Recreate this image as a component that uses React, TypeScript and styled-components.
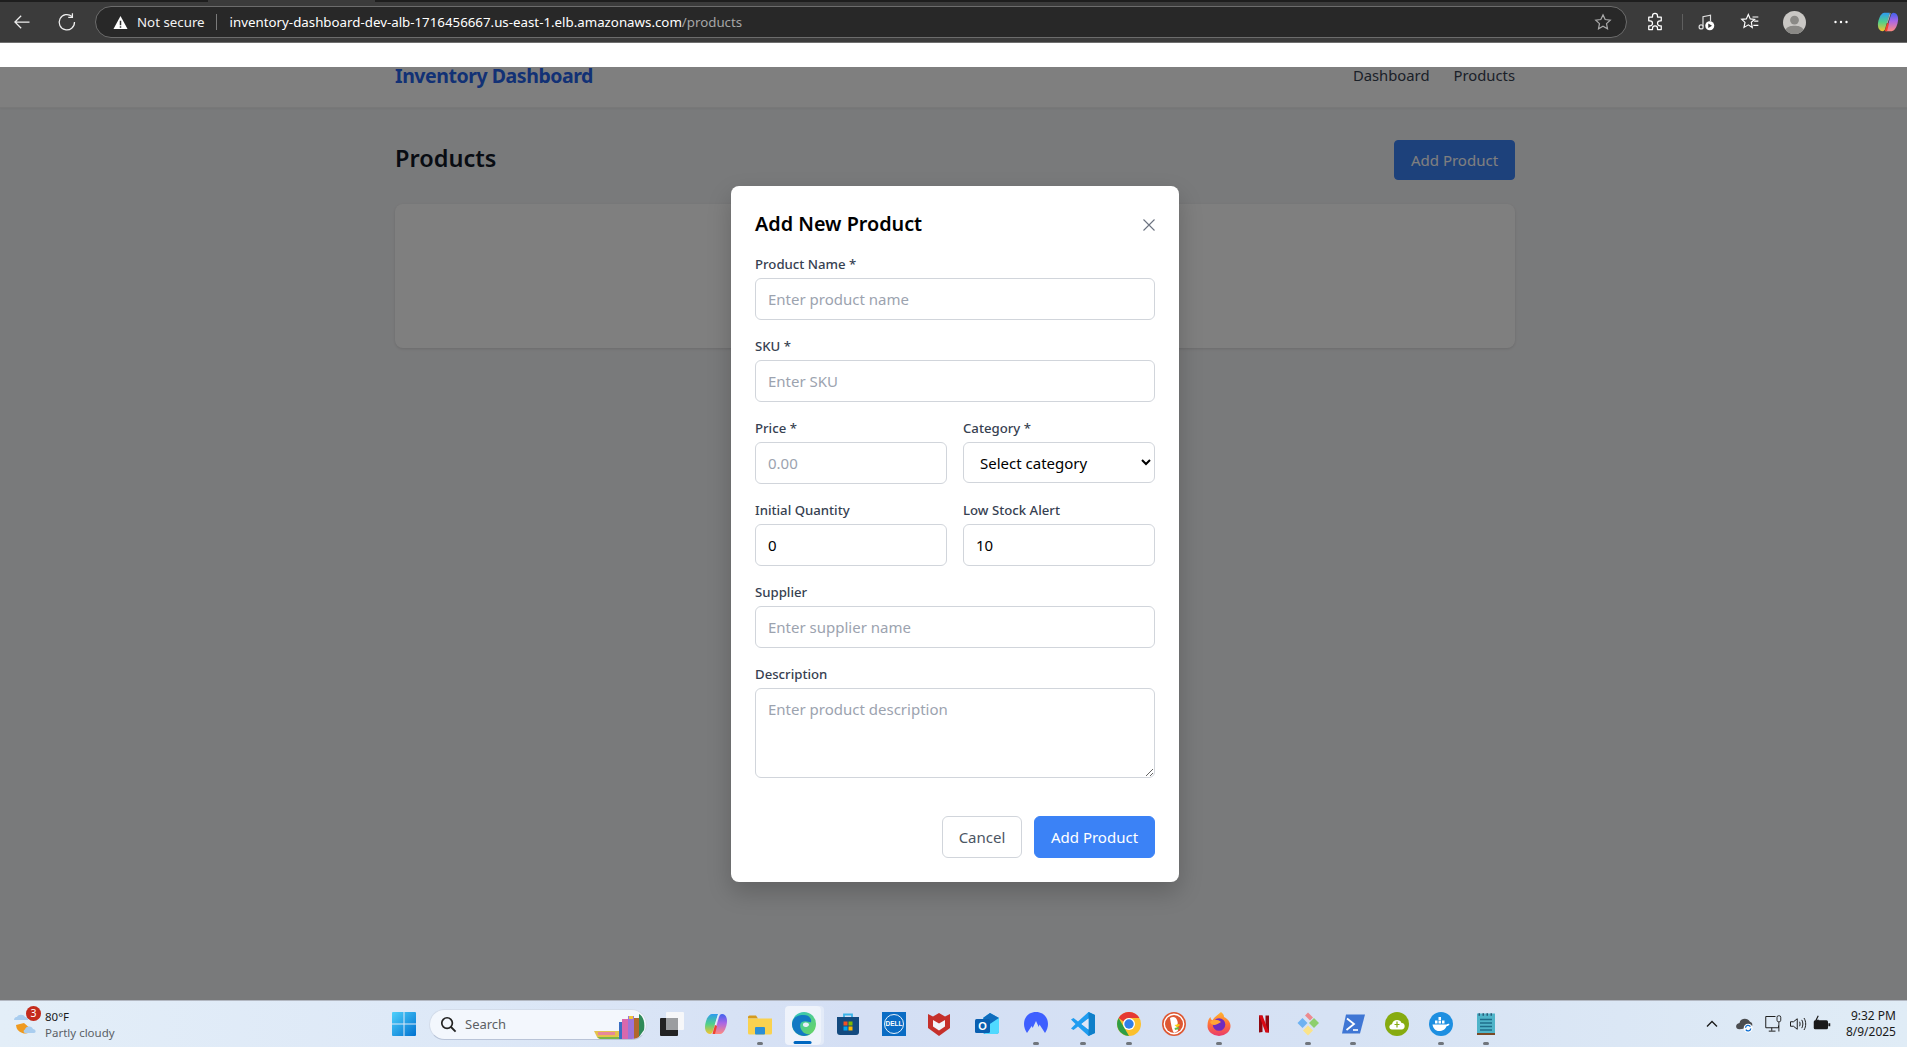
import React from "react";
import styled, { createGlobalStyle } from "styled-components";

const GlobalStyle = createGlobalStyle`
  html, body {
    margin: 0;
    padding: 0;
    height: 100%;
    overflow: hidden;
    font-family: "Noto Sans", "Liberation Sans", sans-serif;
  }
  #root { height: 100%; }
  * { box-sizing: border-box; }
`;

const Screen = styled.div`
  height: 1047px;
  display: flex;
  flex-direction: column;
`;

/* ---------- browser chrome ---------- */

const BrowserBar = styled.header`
  height: 43px;
  flex: none;
  background: #3b3b3b;
  border-top: 2px solid #1e1e1e;
  border-bottom: 1px solid #6f6f6f;
  display: flex;
  align-items: center;
  color: #fff;
  position: relative;
`;

const ActiveTab = styled.div`
  position: absolute;
  top: -2px;
  left: 208px;
  width: 167px;
  height: 2px;
  background: #3b3b3b;
`;

const NavIcon = styled.div<{ $w: number }>`
  width: ${(p) => p.$w}px;
  flex: none;
  display: flex;
  align-items: center;
  justify-content: center;
`;

const AddressBar = styled.div`
  width: 1532px;
  height: 32px;
  margin-left: 6px;
  flex: none;
  background: #282828;
  border: 1px solid #6c6c6c;
  border-radius: 16px;
  display: flex;
  align-items: center;
  padding: 0 14px 0 17px;
  font-size: 13.3px;
`;

const Secure = styled.span`
  margin-left: 9px;
  padding-right: 11px;
  border-right: 1px solid #7a7a7a;
  line-height: 16px;
  color: #f2f2f2;
`;

const Url = styled.span`
  margin-left: 13px;
  flex: 1;
  color: #fff;
  white-space: nowrap;
`;

const UrlPath = styled.span`
  color: #a6a6a6;
`;

const ToolSlot = styled.div<{ $w: number }>`
  width: ${(p) => p.$w}px;
  flex: none;
  display: flex;
  align-items: center;
  justify-content: center;
`;

const ToolDivider = styled.div`
  width: 1px;
  height: 16px;
  background: #5f5f5f;
  flex: none;
`;

const WhiteStrip = styled.div`
  height: 24px;
  flex: none;
  background: #fff;
`;

/* ---------- page behind the dialog ---------- */

const Page = styled.main`
  flex: 1;
  min-height: 0;
  width: 1910px;
  position: relative;
  background: #f3f4f6;
`;

const TopNav = styled.nav`
  height: 41px;
  background: #fff;
  border-bottom: 1px solid #f0f0f0;
  box-shadow: 0 1px 2px rgba(0, 0, 0, 0.05);
`;

const Container = styled.div`
  width: 1120px;
  margin: 0 auto;
`;

const NavRow = styled(Container)`
  display: flex;
  justify-content: space-between;
  align-items: flex-start;
`;

const Brand = styled.a`
  font-size: 19.5px;
  font-weight: 700;
  line-height: 18px;
  color: #2563eb;
  letter-spacing: -0.45px;
`;

const NavLinks = styled.div`
  display: flex;
  gap: 24px;
`;

const NavLink = styled.a`
  font-size: 14.8px;
  line-height: 16px;
  color: #374151;
`;

const Content = styled(Container)`
  padding-top: 32px;
`;

const PageHead = styled.div`
  display: flex;
  justify-content: space-between;
  align-items: flex-start;
  margin-bottom: 24px;
`;

const PageTitle = styled.h1`
  margin: 0;
  font-size: 23.5px;
  line-height: 36px;
  font-weight: 600;
  color: #111827;
`;

const Card = styled.section`
  height: 144px;
  background: #fff;
  border-radius: 8px;
  box-shadow: 0 1px 3px rgba(0, 0, 0, 0.12);
`;

/* ---------- dialog ---------- */

const Overlay = styled.div`
  position: absolute;
  inset: 0;
  padding-top: 1px;
  background: rgba(0, 0, 0, 0.5);
  display: flex;
  align-items: center;
  justify-content: center;
`;

const Modal = styled.form`
  width: 448px;
  background: #fff;
  border-radius: 8px;
  padding: 24px;
  box-shadow: 0 10px 25px rgba(0, 0, 0, 0.2);
`;

const ModalHead = styled.div`
  height: 28px;
  margin-bottom: 16px;
  display: flex;
  justify-content: space-between;
  align-items: center;
`;

const ModalTitle = styled.h2`
  margin: 0;
  font-size: 19.8px;
  line-height: 28px;
  font-weight: 600;
  color: #000;
`;

const CloseButton = styled.button`
  border: 0;
  padding: 0;
  margin-top: 2px;
  background: none;
  display: flex;
  color: #6b7280;
`;

const Field = styled.div`
  margin-bottom: 16px;
  min-width: 0;
`;

const FieldRow = styled.div`
  display: grid;
  grid-template-columns: 1fr 1fr;
  gap: 16px;
`;

const Label = styled.label`
  display: block;
  height: 20px;
  margin-bottom: 4px;
  font-size: 13.2px;
  line-height: 20px;
  font-weight: 500;
  color: #374151;
`;

const controlStyles = `
  display: block;
  width: 100%;
  border: 1px solid #d1d5db;
  border-radius: 6px;
  font-family: inherit;
  font-size: 15px;
  color: #000;
  background: #fff;
  &::placeholder { color: #9ca3af; opacity: 1; }
`;

const Input = styled.input`
  ${controlStyles}
  height: 42px;
  padding: 0 12px;
`;

const Select = styled.select`
  ${controlStyles}
  height: 41px;
  padding: 0 12px;
`;

const TextArea = styled.textarea`
  ${controlStyles}
  height: 90px;
  padding: 10px 12px;
  resize: vertical;
`;

const Actions = styled.div`
  display: flex;
  justify-content: flex-end;
  gap: 12px;
  margin-top: 38px;
`;

const Button = styled.button<{ $primary?: boolean; $w: number; $h: number }>`
  width: ${(p) => p.$w}px;
  height: ${(p) => p.$h}px;
  padding: 0;
  border-radius: ${(p) => (p.$h === 40 ? 4 : 6)}px;
  font-family: inherit;
  font-size: 15px;
  border: 1px solid ${(p) => (p.$primary ? "#3b82f6" : "#d1d5db")};
  background: ${(p) => (p.$primary ? "#3b82f6" : "#fff")};
  color: ${(p) => (p.$primary ? "#fff" : "#4b5563")};
`;

/* ---------- windows taskbar ---------- */

const Taskbar = styled.footer`
  height: 47px;
  flex: none;
  border-top: 1px solid #b3b8c2;
  background: linear-gradient(90deg, #e3eef8 0%, #dde8f7 25%, #d4dff4 45%, #d6e2f4 70%, #e0ecf6 100%);
  display: flex;
  align-items: center;
  position: relative;
  z-index: 2;
`;

const Weather = styled.div`
  width: 392px;
  flex: none;
  height: 100%;
  padding-left: 13px;
  display: flex;
  align-items: center;
  gap: 6px;
  position: relative;
`;

const WeatherBadge = styled.span`
  position: absolute;
  left: 26px;
  top: 5px;
  width: 15px;
  height: 15px;
  border-radius: 50%;
  background: #c42b1c;
  color: #fff;
  font-size: 10.5px;
  line-height: 15px;
  text-align: center;
`;

const WeatherText = styled.div`
  font-size: 11.5px;
  line-height: 16px;
  color: #1a1a1a;
  margin-top: 1px;
`;

const WeatherSub = styled.div`
  color: #5a5f66;
`;

const SearchPill = styled.div`
  width: 218px;
  height: 31px;
  margin: 0 13px;
  flex: none;
  border-radius: 16px;
  background: #f3f7fd;
  border: 1px solid #d3dcea;
  border-bottom-color: #b9c4d8;
  display: flex;
  align-items: center;
  padding-left: 10px;
  position: relative;
  overflow: hidden;
  font-size: 13px;
  color: #5c5f64;
`;

const SearchLabel = styled.span`
  margin-left: 8px;
`;

const SearchArt = styled.div`
  position: absolute;
  right: 0;
  top: 0;
  display: flex;
`;

const AppList = styled.div`
  display: flex;
  margin-left: 10px;
  flex: none;
`;

const AppSlot = styled.div<{ $extra: number; $active?: boolean }>`
  width: 44px;
  height: 44px;
  margin-left: ${(p) => p.$extra}px;
  flex: none;
  display: flex;
  align-items: center;
  justify-content: center;
  position: relative;

  ${(p) =>
    p.$active &&
    `&::before {
      content: "";
      position: absolute;
      left: 3px;
      right: 5px;
      top: 4px;
      bottom: 1px;
      border-radius: 4px;
      background: rgba(255, 255, 255, 0.6);
      box-shadow: 3px 0 0 rgba(255, 255, 255, 0.35);
    }`}

  & > svg {
    position: relative;
  }
`;

const RunDot = styled.span<{ $active?: boolean }>`
  position: absolute;
  bottom: ${(p) => (p.$active ? 2 : 1)}px;
  left: 50%;
  transform: translateX(${(p) => (p.$active ? -58 : -50)}%);
  width: ${(p) => (p.$active ? 18 : 6)}px;
  height: 3px;
  border-radius: 2px;
  background: ${(p) => (p.$active ? "#0067c0" : "#70757c")};
`;

const Tray = styled.div`
  margin-left: auto;
  display: flex;
  align-items: center;
  height: 100%;
  padding-right: 11px;
`;

const TraySlot = styled.div<{ $w: number }>`
  width: ${(p) => p.$w}px;
  flex: none;
  display: flex;
  align-items: center;
  justify-content: center;
`;

const Clock = styled.div`
  margin-left: 8px;
  width: 52px;
  font-size: 12px;
  line-height: 16px;
  text-align: right;
  color: #1a1a1a;
  white-space: nowrap;
`;

/* ---------- icons ---------- */

const Svg = ({ s = 24, v = 24, children }: { s?: number; v?: number; children: React.ReactNode }) => (
  <svg width={s} height={s} viewBox={`0 0 ${v} ${v}`} fill="none">
    {children}
  </svg>
);

const BackIcon = () => (
  <Svg s={20}>
    <path d="M21 12H4M11 4.5 3.5 12l7.5 7.5" stroke="#eee" strokeWidth="1.5" />
  </Svg>
);
const ReloadIcon = () => (
  <Svg s={20}>
    <path d="M18 5.5A9.2 9.2 0 1 0 21 12" stroke="#eee" strokeWidth="1.5" />
    <path d="M18.5 1.5v5h-5" stroke="#eee" strokeWidth="1.5" />
  </Svg>
);
const WarnIcon = () => (
  <Svg s={15} v={16}>
    <path d="M8 1 15.5 15H.5z" fill="#fff" />
    <path d="M7.2 6h1.6v5H7.2zM7.2 12h1.6v1.6H7.2z" fill="#333" />
  </Svg>
);
const StarIcon = () => (
  <Svg s={18}>
    <path d="m12 2.5 2.9 6.2 6.8.8-5 4.7 1.3 6.8-6-3.4-6 3.4 1.3-6.8-5-4.7 6.8-.8z" stroke="#aaa" strokeWidth="1.6" />
  </Svg>
);
const PuzzleIcon = () => (
  <Svg s={20}>
    <path
      d="M9 4.5a3 3 0 0 1 6 0V6h4.5v4.5H18a3 3 0 0 0 0 6h1.5V21H15v-1.500a3 3 0 0 0-6 0V21H4.500v-4.500H6a3 3 0 0 0 0-6H4.500V6H9z"
      stroke="#fff"
      strokeWidth="1.5"
      strokeLinejoin="round"
    />
  </Svg>
);
const MusicIcon = () => (
  <Svg s={18}>
    <path d="M8 18V5l10-2v8" stroke="#ddd" strokeWidth="1.6" />
    <circle cx="5.5" cy="18.5" r="2.7" stroke="#ddd" strokeWidth="1.6" />
    <circle cx="17" cy="17" r="6" fill="#fff" />
    <path d="m15 14 5 3-5 3z" fill="#333" />
  </Svg>
);
const FavIcon = () => (
  <Svg s={20}>
    <path d="m10 3 2.3 5.3 5.2.5-3.900 3.600 1.100 6.100L10 15.400 4.800 18.500l1.200-6L2 8.800l5.600-.5z" stroke="#fff" strokeWidth="1.4" />
    <path d="M15 6h7M17 11h5M16 16h6" stroke="#fff" strokeWidth="1.4" />
  </Svg>
);
const AvatarIcon = () => (
  <Svg s={23}>
    <circle cx="12" cy="12" r="12" fill="#c9c7c4" />
    <circle cx="12" cy="9.5" r="4.6" fill="#8a8986" />
    <path d="M2.5 19.500C5 16 8 15.500 12 15.500s7 .5 9.500 4A12 12 0 0 1 2.500 19.500z" fill="#8a8986" />
  </Svg>
);
const MoreIcon = () => (
  <Svg s={16} v={16}>
    <circle cx="2.5" cy="8" r="1.2" fill="#fff" />
    <circle cx="8" cy="8" r="1.2" fill="#fff" />
    <circle cx="13.5" cy="8" r="1.2" fill="#fff" />
  </Svg>
);
const CopilotIcon = ({ s = 24 }: { s?: number }) => (
  <Svg s={s}>
    <defs>
      <linearGradient id="cp1" x1="0" y1="0" x2="0" y2="1">
        <stop offset="0" stopColor="#2e9bf0" />
        <stop offset="0.5" stopColor="#4fd08a" />
        <stop offset="1" stopColor="#f7c42c" />
      </linearGradient>
      <linearGradient id="cp2" x1="0" y1="0" x2="0" y2="1">
        <stop offset="0" stopColor="#3f62ee" />
        <stop offset="0.45" stopColor="#a866e6" />
        <stop offset="1" stopColor="#ff8a80" />
      </linearGradient>
    </defs>
    <path d="M8 2h6L9 19c-.6 2-1.500 3-3 3C3 22 1 19 1 15 1 10 4 2 8 2z" fill="url(#cp1)" />
    <path d="M16 22h-6l5-17c.6-2 1.500-3 3-3 3 0 5 3 5 7 0 5-3 13-7 13z" fill="url(#cp2)" />
    <path d="M9.500 18 11 13l2 1-2 8H8.500z" fill="#f0432e" />
    <path d="M11.200 13 14.500 2.500" stroke="#f4f4ff" strokeWidth="1" opacity="0.7" />
  </Svg>
);
const CloseIcon = () => (
  <Svg s={12} v={12}>
    <path d="M.5.5l11 11M11.500.5l-11 11" stroke="currentColor" strokeWidth="1.1" />
  </Svg>
);
const WeatherIcon = () => (
  <Svg s={26} v={26}>
    <path d="M3 14a9 9 0 0 0 16 5L11 12z" fill="#ef9a1f" />
    <path d="M1 9c0-2.500 2-3 3-3 1-3 7-3 8 0 2 0 3 1 3 3z" fill="#a9cdef" />
    <path d="M12 22c-1.500 0-2-3 0-3.500.5-3 6-4.500 8-.5 3 0 3.500 4 1 4z" fill="#a9cdef" />
  </Svg>
);
const SearchIcon = () => (
  <Svg s={17}>
    <circle cx="10" cy="10" r="7.5" stroke="#222" strokeWidth="2.4" />
    <path d="m15.500 15.500 6.500 6.500" stroke="#222" strokeWidth="2.6" />
  </Svg>
);
const StartLogo = () => (
  <Svg s={24}>
    <defs>
      <linearGradient id="win" x1="0" y1="0" x2="1" y2="1">
        <stop offset="0" stopColor="#4fd0fb" />
        <stop offset="1" stopColor="#0071d0" />
      </linearGradient>
    </defs>
    <path
      d="M0 1a1 1 0 0 1 1-1h10.500v11.500H0zM12.500 0H23a1 1 0 0 1 1 1v10.500H12.500zM0 12.500h11.500V24H1a1 1 0 0 1-1-1zM12.500 12.500H24V23a1 1 0 0 1-1 1H12.500z"
      fill="url(#win)"
    />
  </Svg>
);
const BooksArt = () => (
  <svg width="52" height="31" viewBox="0 0 52 31">
    <path d="M0 21h25v5l-2 4H6l-3-3z" fill="#e5c24d" />
    <path d="M4 22h17v3H4z" fill="#e8879a" />
    <path d="M3 27h22v3H8z" fill="#7ab648" />
    <rect x="25" y="12" width="3" height="19" fill="#3a6fc4" />
    <rect x="28" y="9" width="6" height="22" fill="#d968ad" />
    <rect x="34" y="6" width="6" height="25" fill="#9c74d8" />
    <rect x="35" y="6" width="4" height="3" fill="#f0c53a" />
    <rect x="40" y="8" width="5" height="23" fill="#b1672c" />
    <path d="M45 4c5 3 6 9 5 16l-5 7z" fill="#2f8a58" />
  </svg>
);
const TaskViewIcon = () => (
  <Svg s={24}>
    <rect x="6" y="0" width="18" height="18" rx="1" fill="#f6f7f9" />
    <rect x="0" y="6" width="18" height="18" rx="1" fill="#232323" />
    <rect x="6" y="6" width="12" height="12" fill="#9b9da0" />
  </Svg>
);
const FilesIcon = () => (
  <Svg>
    <path d="M0 5a1.500 1.500 0 0 1 1.500-1.500H8l2 3H0z" fill="#d59a1e" />
    <path d="M0 6.500h24V21a1.500 1.500 0 0 1-1.500 1.500h-21A1.500 1.500 0 0 1 0 21z" fill="#fad24f" />
    <rect x="7" y="15" width="10" height="7.5" rx="1" fill="#2b8fd6" />
  </Svg>
);
const EdgeIcon = () => (
  <Svg>
    <defs>
      <linearGradient id="edge1" x1="0" y1="0" x2="1" y2="1">
        <stop offset="0" stopColor="#2ec4c4" />
        <stop offset="1" stopColor="#6fd65a" />
      </linearGradient>
    </defs>
    <circle cx="12" cy="12" r="12" fill="url(#edge1)" />
    <path d="M0 12C1 4 7 3 12 3c5 0 8 4 7 7-1 1-5-2-9 0-3 2-2 7 1 10 2 2 5 3 8 1.500A12 12 0 0 1 0 12z" fill="#1279c4" />
    <path d="M11 12c1-2 4-2 5.500-.5 1.500 1.500-.5 3.500-3 3.500-1.500 0-3-1-2.500-3z" fill="#e6eef8" />
  </Svg>
);
const StoreIcon = () => (
  <Svg>
    <path d="M8 5V2.500h8V5" stroke="#3ab4e8" strokeWidth="1.8" />
    <path d="M1 5h22v15a3 3 0 0 1-3 3H4a3 3 0 0 1-3-3z" fill="#134a7f" />
    <rect x="7.5" y="9.500" width="4" height="4" fill="#f25022" />
    <rect x="12.5" y="9.500" width="4" height="4" fill="#7fba00" />
    <rect x="7.5" y="14.500" width="4" height="4" fill="#00a4ef" />
    <rect x="12.5" y="14.500" width="4" height="4" fill="#ffb900" />
  </Svg>
);
const DellIcon = () => (
  <Svg>
    <rect width="24" height="24" fill="#0a6cc4" />
    <circle cx="12" cy="12" r="9.5" stroke="#fff" strokeWidth="0.9" />
    <text x="12" y="14.3" textAnchor="middle" fontSize="6.5" fontWeight="700" fill="#fff" fontFamily="Liberation Sans">
      DELL
    </text>
  </Svg>
);
const McAfeeIcon = () => (
  <Svg>
    <path d="M1 2 6 4.500l6-3.500 6 3.500L23 2v14l-11 8L1 16z" fill="#c5302b" />
    <path d="M6 8l6 3.500L18 8v6.500l-6 4-6-4z" fill="#f2f4fa" />
  </Svg>
);
const OutlookIcon = () => (
  <Svg>
    <path d="M8 6l7-5 9 5v13a3 3 0 0 1-3 3H10a2 2 0 0 1-2-2z" fill="#28a8ea" />
    <path d="M15 1l9 5-9 6-7-6z" fill="#0f6cbd" />
    <path d="M12 14l12-8v13a3 3 0 0 1-3 3H10z" fill="#50d9ff" />
    <rect x="0" y="7" width="15" height="14" rx="1.5" fill="#0a5fb0" />
    <text x="7.5" y="18" textAnchor="middle" fontSize="11" fontWeight="700" fill="#fff" fontFamily="Liberation Sans">
      O
    </text>
  </Svg>
);
const NordIcon = () => (
  <Svg>
    <path d="M3 21C1 18 0 15 0 12 0 5 5 0 12 0s12 5 12 12c0 3-1 6-3 9l-5.500-8.500-.7 2.500-2.800-6-3.300 7-1-2z" fill="#3e5fff" />
  </Svg>
);
const VscodeIcon = () => (
  <Svg>
    <path d="M17.500 0 24 3v18l-6.500 3L7 14.500 2.500 18 0 16.500 4.500 12 0 7.500 2.500 6 7 9.500z" fill="#1f9cf0" />
    <path d="M17.500 6.500 10.500 12l7 5.500z" fill="#dfe6f6" />
    <path d="M17.500 0 24 3v18l-6.500 3z" fill="#0f7fc9" />
    <path d="M17.500 6.500 10.500 12l7 5.500z" fill="#dfe6f6" />
  </Svg>
);
const ChromeIcon = () => (
  <Svg>
    <circle cx="12" cy="12" r="12" fill="#fbc02d" />
    <path d="M1.600 6 8 17l4 6.900A12 12 0 0 1 1.600 6z" fill="#2e9e46" />
    <path d="M1.600 6A12 12 0 0 1 22.400 6H12a6 6 0 0 0-5.500 3.500z" fill="#e53935" />
    <circle cx="12" cy="12" r="6" fill="#fff" />
    <circle cx="12" cy="12" r="4.7" fill="#2f7fe8" />
  </Svg>
);
const DuckIcon = () => (
  <Svg>
    <circle cx="12" cy="12" r="11.2" fill="#fff" stroke="#de5833" strokeWidth="1.6" />
    <circle cx="12" cy="12" r="9" fill="#de5833" />
    <path d="M8 6c3-2 6-1 7 2 1 2 1 4 0 5l1 6-4 2c-2-3-3-9-4-15z" fill="#fff" />
    <path d="M12.500 13l5-1v2l-3 1z" fill="#fdd20a" />
    <path d="M12.500 16l4-1 .5 2-4 1z" fill="#65bc46" />
  </Svg>
);
const FirefoxIcon = () => (
  <Svg>
    <defs>
      <linearGradient id="ff" x1="0" y1="0" x2="0" y2="1">
        <stop offset="0" stopColor="#ffb62e" />
        <stop offset="0.5" stopColor="#ff7139" />
        <stop offset="1" stopColor="#ea3a6c" />
      </linearGradient>
    </defs>
    <path d="M14 0c2 1.500 3 3 3 5 4 2 6.500 5 6.500 9A11.500 10 0 0 1 .5 14C.5 9 2 6 3.500 5c0 2 1 3 2 3.500C7 5 11 3 14 0z" fill="url(#ff)" />
    <circle cx="12" cy="12.5" r="6.3" fill="#6e2bc0" />
    <path d="M3 10c3-3 8-3 11 0-2 1-5 3-7 3-2 0-3-1-4-3z" fill="#ffa436" />
  </Svg>
);
const NetflixIcon = () => (
  <Svg>
    <path d="M7 3.500h3.500V20L7 20.500z" fill="#8f0810" />
    <path d="M13.500 3.500H17v17L13.500 20z" fill="#8f0810" />
    <path d="M7 3.500h3.500L17 20.500h-3.500z" fill="#d90a14" />
  </Svg>
);
const GitIcon = () => (
  <Svg>
    <path d="M12 .5 17 5.500l-3 3-5-5z" fill="#ed8a8e" />
    <path d="M6.500 6 11.500 11l-5 5-5-5z" fill="#6eb2f2" />
    <path d="M18 6l5 5-5 5-5-5z" fill="#8dcf6e" />
    <path d="M12 13.500l5 5-5 5-5-5z" fill="#fae38a" />
  </Svg>
);
const PowerShellIcon = () => (
  <Svg>
    <path d="M5 2.500h19L19 21.500H1z" fill="#3f76d4" />
    <path d="M6 6.500 13 12 5.500 18" stroke="#fff" strokeWidth="1.8" />
    <path d="M12 18h5" stroke="#fff" strokeWidth="1.6" />
  </Svg>
);
const GreenCloudIcon = () => (
  <Svg>
    <circle cx="12" cy="12" r="12" fill="#86ab10" />
    <path d="M7 17.500c-3.500 0-3.500-5 0-5.200C7.500 7.500 15 6.500 16.500 11c4-.5 4.500 6.500 0 6.500z" fill="#fff" />
    <path d="M12 9.500v6M9.500 12.500h5" stroke="#86ab10" strokeWidth="1.2" />
  </Svg>
);
const DockerIcon = () => (
  <Svg>
    <circle cx="12" cy="12" r="12" fill="#1d8fe1" />
    <path d="M3.500 12.500h14c.8-.8 2-1 3-.5-.5 1.500-1.500 2-2.800 2-1 3-4 5-7.700 5-3.500 0-5.800-2.500-6.500-6.500z" fill="#fff" />
    <path d="M6 8.500h2.500v3H6zM9.500 8.500h2.500v3H9.500zM13 8.500h2.500v3H13zM9.500 5h2.500v3H9.500z" fill="#fff" />
  </Svg>
);
const NotepadIcon = () => (
  <Svg>
    <rect x="3" y="1.5" width="18" height="20" fill="#4fb4c9" />
    <rect x="3" y="21" width="18" height="2" fill="#7a4a26" />
    <path d="M4.500 2.500h1.500M8.500 2.500h1.500M12.500 2.500h1.500M16.500 2.500h1.500" stroke="#2a5c7a" strokeWidth="2.5" />
    <path d="M6 7.500h12M6 11h12M6 14.500h12M6 18h12" stroke="#1f6d8a" strokeWidth="1.5" />
  </Svg>
);
const ChevronUp = () => (
  <Svg s={12} v={12}>
    <path d="m1 8.500 5-5 5 5" stroke="#1a1a1a" strokeWidth="1.3" />
  </Svg>
);
const SyncCloudIcon = () => (
  <Svg s={18}>
    <path d="M6 19c-6 0-6-8 0-8.500C7 4 17 3 20 9c4 1 4 6 1 8z" fill="#4b4d50" />
    <circle cx="17.5" cy="17.5" r="6" fill="#fff" />
    <path d="M14 17a3.500 3.500 0 0 1 6.500-1.500M21 18a3.500 3.500 0 0 1-6.500 1.500" stroke="#0a6cd0" strokeWidth="1.8" />
  </Svg>
);
const MonitorIcon = () => (
  <Svg s={18}>
    <path d="M14 2H1v15h17v-3M9 17v4M5 21.500h9" stroke="#1a1a1a" strokeWidth="1.3" />
    <rect x="16" y="1" width="5" height="8" rx="2" stroke="#1a1a1a" strokeWidth="1.2" />
    <path d="M18.500 9v13" stroke="#1a1a1a" strokeWidth="1.2" />
  </Svg>
);
const SpeakerIcon = () => (
  <Svg s={18}>
    <path d="M2 9v6h4l5 4V5L6 9z" stroke="#1a1a1a" strokeWidth="1.3" />
    <path d="M14 9c1 2 1 4 0 6M17 6.500c2 3.500 2 7.500 0 11M20 4c3 5 3 11 0 16" stroke="#1a1a1a" strokeWidth="1.3" />
  </Svg>
);
const BatteryIcon = () => (
  <Svg s={18}>
    <rect x="1" y="7" width="19" height="12" rx="2" fill="#1a1a1a" />
    <rect x="20.5" y="11" width="2.5" height="4" fill="#1a1a1a" />
    <path d="M7 1 4 7h3l-2 4" stroke="#1a1a1a" strokeWidth="1.5" />
  </Svg>
);

const apps: { key: string; icon: React.ReactNode; extra: number; running?: boolean; active?: boolean }[] = [
  { key: "copilot", icon: <CopilotIcon />, extra: 0 },
  { key: "files", icon: <FilesIcon />, extra: 0, running: true },
  { key: "edge", icon: <EdgeIcon />, extra: 0, running: true, active: true },
  { key: "store", icon: <StoreIcon />, extra: 0 },
  { key: "dell", icon: <DellIcon />, extra: 2 },
  { key: "mcafee", icon: <McAfeeIcon />, extra: 1 },
  { key: "outlook", icon: <OutlookIcon />, extra: 4 },
  { key: "nord", icon: <NordIcon />, extra: 5, running: true },
  { key: "vscode", icon: <VscodeIcon />, extra: 3, running: true },
  { key: "chrome", icon: <ChromeIcon />, extra: 2, running: true },
  { key: "duck", icon: <DuckIcon />, extra: 1 },
  { key: "firefox", icon: <FirefoxIcon />, extra: 1, running: true },
  { key: "netflix", icon: <NetflixIcon />, extra: 1 },
  { key: "git", icon: <GitIcon />, extra: 0, running: true },
  { key: "powershell", icon: <PowerShellIcon />, extra: 1, running: true },
  { key: "cloud", icon: <GreenCloudIcon />, extra: 0 },
  { key: "docker", icon: <DockerIcon />, extra: 0, running: true },
  { key: "notepad", icon: <NotepadIcon />, extra: 1, running: true },
];

export default function App() {
  return (
    <Screen>
      <GlobalStyle />
      <BrowserBar>
        <ActiveTab />
        <NavIcon $w={44}>
          <BackIcon />
        </NavIcon>
        <NavIcon $w={45}>
          <ReloadIcon />
        </NavIcon>
        <AddressBar>
          <WarnIcon />
          <Secure>Not secure</Secure>
          <Url>
            inventory-dashboard-dev-alb-1716456667.us-east-1.elb.amazonaws.com
            <UrlPath>/products</UrlPath>
          </Url>
          <StarIcon />
        </AddressBar>
        <ToolSlot $w={55}>
          <PuzzleIcon />
        </ToolSlot>
        <ToolDivider />
        <ToolSlot $w={45}>
          <MusicIcon />
        </ToolSlot>
        <ToolSlot $w={43}>
          <FavIcon />
        </ToolSlot>
        <ToolSlot $w={47}>
          <AvatarIcon />
        </ToolSlot>
        <ToolSlot $w={46}>
          <MoreIcon />
        </ToolSlot>
        <ToolSlot $w={48}>
          <CopilotIcon s={22} />
        </ToolSlot>
      </BrowserBar>
      <WhiteStrip />
      <Page>
        <TopNav>
          <NavRow>
            <Brand>Inventory Dashboard</Brand>
            <NavLinks>
              <NavLink>Dashboard</NavLink>
              <NavLink>Products</NavLink>
            </NavLinks>
          </NavRow>
        </TopNav>
        <Content>
          <PageHead>
            <PageTitle>Products</PageTitle>
            <Button $primary $w={121} $h={40} type="button">
              Add Product
            </Button>
          </PageHead>
          <Card />
        </Content>
        <Overlay>
          <Modal>
            <ModalHead>
              <ModalTitle>Add New Product</ModalTitle>
              <CloseButton type="button" aria-label="Close">
                <CloseIcon />
              </CloseButton>
            </ModalHead>
            <Field>
              <Label>Product Name *</Label>
              <Input placeholder="Enter product name" />
            </Field>
            <Field>
              <Label>SKU *</Label>
              <Input placeholder="Enter SKU" />
            </Field>
            <FieldRow>
              <Field>
                <Label>Price *</Label>
                <Input placeholder="0.00" />
              </Field>
              <Field>
                <Label>Category *</Label>
                <Select defaultValue="">
                  <option value="">Select category</option>
                </Select>
              </Field>
            </FieldRow>
            <FieldRow>
              <Field>
                <Label>Initial Quantity</Label>
                <Input defaultValue="0" />
              </Field>
              <Field>
                <Label>Low Stock Alert</Label>
                <Input defaultValue="10" />
              </Field>
            </FieldRow>
            <Field>
              <Label>Supplier</Label>
              <Input placeholder="Enter supplier name" />
            </Field>
            <Field>
              <Label>Description</Label>
              <TextArea placeholder="Enter product description" />
            </Field>
            <Actions>
              <Button $w={80} $h={42} type="button">
                Cancel
              </Button>
              <Button $primary $w={121} $h={42} type="button">
                Add Product
              </Button>
            </Actions>
          </Modal>
        </Overlay>
      </Page>
      <Taskbar>
        <Weather>
          <WeatherIcon />
          <WeatherBadge>3</WeatherBadge>
          <WeatherText>
            80°F
            <WeatherSub>Partly cloudy</WeatherSub>
          </WeatherText>
        </Weather>
        <StartLogo />
        <SearchPill>
          <SearchIcon />
          <SearchLabel>Search</SearchLabel>
          <SearchArt>
            <BooksArt />
          </SearchArt>
        </SearchPill>
        <TaskViewIcon />
        <AppList>
          {apps.map((app) => (
            <AppSlot key={app.key} $extra={app.extra} $active={app.active}>
              {app.icon}
              {app.running && <RunDot $active={app.active} />}
            </AppSlot>
          ))}
        </AppList>
        <Tray>
          <TraySlot $w={33}>
            <ChevronUp />
          </TraySlot>
          <TraySlot $w={32}>
            <SyncCloudIcon />
          </TraySlot>
          <TraySlot $w={28}>
            <MonitorIcon />
          </TraySlot>
          <TraySlot $w={20}>
            <SpeakerIcon />
          </TraySlot>
          <TraySlot $w={28}>
            <BatteryIcon />
          </TraySlot>
          <Clock>
            9:32 PM
            <br />
            8/9/2025
          </Clock>
        </Tray>
      </Taskbar>
    </Screen>
  );
}
